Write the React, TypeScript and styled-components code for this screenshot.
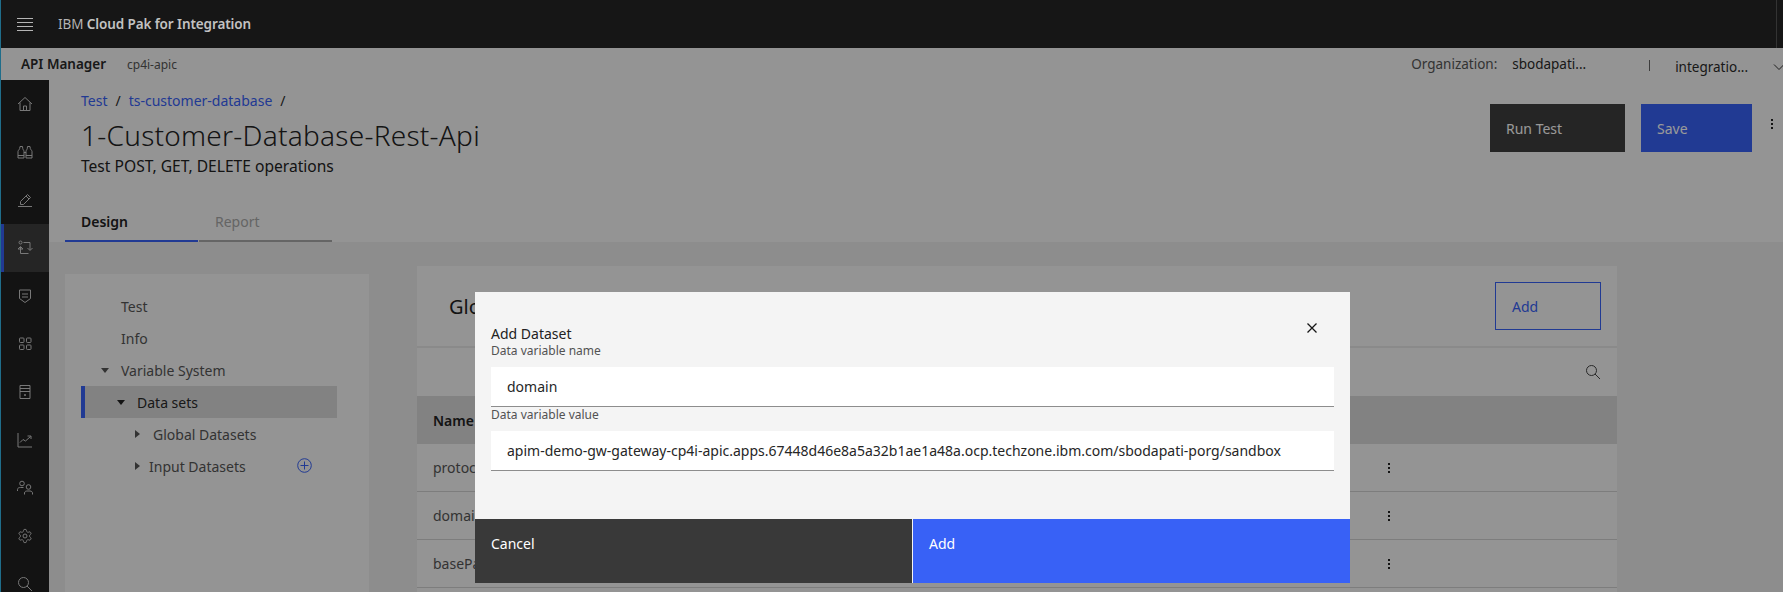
import React from 'react';
import styled, { createGlobalStyle } from 'styled-components';

const GlobalStyle = createGlobalStyle`
  html, body { margin: 0; padding: 0; background: #f7f7f7; }
  * { box-sizing: border-box; }
  body { font-family: "Noto Sans", "Open Sans", Arial, sans-serif; }
`;

const Page = styled.div`
  width: 1783px;
  height: 592px;
  overflow: hidden;
  display: flex;
  flex-direction: column;
  border-left: 1px solid #1f6d8a;
  background: #f7f7f7;
`;

const TopBar = styled.header`
  flex: 0 0 48px;
  display: flex;
  align-items: center;
  background: #161616;
  color: #b4b4b4;
  font-size: 13.5px;
  position: relative;
  z-index: 3;
`;

const Burger = styled.div`
  width: 16px;
  height: 13px;
  margin: 0 17px 0 16px;
  display: flex;
  flex-direction: column;
  justify-content: space-between;
  span { display: block; height: 1px; background: #b5b5b5; }
`;

const Brand = styled.div`
  font-weight: 400;
  margin-left: 8px;
  letter-spacing: -0.1px;
  b { font-weight: 600; color: #c2c2c2; }
`;

const TopDivider = styled.div`
  width: 1px;
  height: 48px;
  background: #333;
  margin-left: auto;
  margin-right: 6px;
`;

const Below = styled.div`
  flex: 1;
  position: relative;
  display: flex;
  flex-direction: column;
  min-height: 0;
`;

const SubHeader = styled.div`
  flex: 0 0 32px;
  display: flex;
  align-items: center;
  padding-left: 20px;
  color: #2a2a2a;
`;

const Product = styled.span`
  font-size: 13.5px;
  font-weight: 600;
  width: 106px;
`;

const Instance = styled.span`
  font-size: 12px;
  color: #555;
`;

const OrgLabel = styled.span`
  margin-left: auto;
  font-size: 13.5px;
  color: #555;
  width: 101px;
`;

const OrgValue = styled.span<{ $drop?: boolean }>`
  font-size: 13.5px;
  color: #2a2a2a;
  ${p => p.$drop && 'padding-top: 5px;'}
`;

const OrgBar = styled.span`
  width: 1px;
  height: 11px;
  background: #666;
  margin: 2px 25px 0 63px;
`;

const ChevronBox = styled.span`
  width: 12px;
  margin: 6px -2px 0 25px;
  display: flex;
`;

const Body = styled.div`
  flex: 1;
  display: flex;
  min-height: 0;
`;

const Sidebar = styled.nav`
  flex: 0 0 48px;
  background: #212121;
  display: flex;
  flex-direction: column;
`;

const NavItem = styled.div<{ $active?: boolean }>`
  flex: 0 0 48px;
  display: flex;
  align-items: center;
  justify-content: center;
  color: #c8c8c8;
  background: ${p => (p.$active ? '#3e3e3e' : 'transparent')};
  box-shadow: ${p => (p.$active ? 'inset 3px 0 0 #3861f6' : 'none')};
  svg { width: 16px; height: 16px; fill: none; stroke: currentColor; stroke-width: 1; }
`;

const Main = styled.main`
  flex: 1;
  display: flex;
  flex-direction: column;
  min-width: 0;
`;

const PageHeader = styled.section`
  flex: 0 0 162px;
  padding: 11px 0 0 32px;
  position: relative;
  display: flex;
  flex-direction: column;
`;

const Crumbs = styled.div`
  display: flex;
  align-items: center;
  height: 18px;
  font-size: 14px;
  gap: 8px;
  color: #2a2a2a;
  a { color: #3861f6; text-decoration: none; }
`;

const Title = styled.h1`
  margin: 8px 0 0;
  height: 36px;
  font-size: 28px;
  line-height: 36px;
  font-weight: 300;
  color: #222;
  letter-spacing: 0.25px;
`;

const Subtitle = styled.p`
  margin: 3px 0 0;
  font-size: 15.6px;
  line-height: 20px;
  font-weight: 400;
  color: #222;
`;

const Tabs = styled.div`
  display: flex;
  gap: 1px;
  margin: auto 0 0 -16px;
`;

const Tab = styled.div<{ $active?: boolean }>`
  width: 133px;
  height: 42px;
  padding: 12px 0 0 16px;
  font-size: 14px;
  font-weight: ${p => (p.$active ? 600 : 400)};
  color: ${p => (p.$active ? '#222' : '#a8a8a8')};
  border-bottom: 2px solid ${p => (p.$active ? '#3861f6' : '#a8a8a8')};
`;

const Actions = styled.div`
  position: absolute;
  top: 24px;
  right: 0;
  display: flex;
  align-items: flex-start;
`;

const ActionButton = styled.button<{ $primary?: boolean }>`
  height: 48px;
  width: ${p => (p.$primary ? '111px' : '135px')};
  margin-right: ${p => (p.$primary ? '12px' : '16px')};
  padding: 0 0 0 16px;
  border: none;
  text-align: left;
  font: 400 14px "Noto Sans", sans-serif;
  color: #fff;
  background: ${p => (p.$primary ? '#3861f6' : '#3e3e3e')};
`;

const MenuDots = styled.span`
  display: flex;
  flex-direction: column;
  gap: 2px;
  width: 16px;
  align-items: center;
  i { display: block; width: 2px; height: 2px; background: currentColor; }
`;

const HeaderDots = styled(MenuDots)`
  margin: 15px 3px 0 0;
  color: #222;
`;

const Content = styled.section`
  flex: 1;
  display: flex;
  align-items: flex-start;
  gap: 48px;
  padding: 24px 0 0 16px;
  background: #ececec;
  min-height: 0;
`;

const Tree = styled.aside`
  flex: 0 0 304px;
  height: 400px;
  margin-top: 8px;
  padding: 16px 32px 16px 16px;
  background: #f7f7f7;
`;

const TreeRow = styled.div<{ $level: number; $selected?: boolean; $gap?: number }>`
  height: 32px;
  display: flex;
  align-items: center;
  padding-left: ${p => 16 + p.$level * 16}px;
  gap: ${p => p.$gap ?? 8}px;
  font-size: 14px;
  color: ${p => (p.$selected ? '#2a2a2a' : '#555')};
  background: ${p => (p.$selected ? '#d9d9d9' : 'transparent')};
  box-shadow: ${p => (p.$selected ? 'inset 4px 0 0 #3861f6' : 'none')};
`;

const CaretSlot = styled.span<{ $shade?: string }>`
  width: 16px;
  height: 16px;
  display: flex;
  align-items: center;
  justify-content: center;
  svg { fill: ${p => p.$shade ?? '#555'}; }
`;

const AddCircle = styled.svg`
  width: 15px;
  height: 15px;
  margin: -2px 25px 0 auto;
  fill: none;
  stroke: #3861f6;
  stroke-width: 1;
`;

const Panel = styled.div`
  flex: 0 0 1200px;
  height: 400px;
  background: #f7f7f7;
`;

const PanelHead = styled.div`
  height: 82px;
  display: flex;
  align-items: center;
  justify-content: space-between;
  padding: 0 16px 0 32px;
  border-bottom: 2px solid #e6e6e6;
`;

const PanelTitle = styled.h2`
  margin: 0;
  font-size: 20px;
  font-weight: 400;
  color: #222;
`;

const OutlineButton = styled.button`
  width: 106px;
  height: 48px;
  padding: 0 0 0 16px;
  text-align: left;
  background: transparent;
  border: 1px solid #3861f6;
  color: #3861f6;
  font: 400 14px "Noto Sans", sans-serif;
`;

const PanelTools = styled.div`
  height: 48px;
  display: flex;
  align-items: center;
  justify-content: flex-end;
  padding-right: 16px;
  color: #444;
  svg { width: 16px; height: 16px; fill: none; stroke: currentColor; stroke-width: 1; }
`;

const TableRow = styled.div<{ $head?: boolean }>`
  height: 48px;
  display: grid;
  grid-template-columns: 948px 16px 1fr;
  align-items: center;
  padding-left: 16px;
  font-size: 14px;
  font-weight: ${p => (p.$head ? 600 : 400)};
  color: ${p => (p.$head ? '#222' : '#555')};
  background: ${p => (p.$head ? '#d9d9d9' : 'transparent')};
  border-bottom: ${p => (p.$head ? 'none' : '1px solid #d0d0d0')};
`;

const RowDots = styled(MenuDots)`
  color: #222;
`;

const Scrim = styled.div`
  position: absolute;
  inset: 0;
  background: rgba(0, 0, 0, 0.4);
`;

const Modal = styled.div`
  position: absolute;
  left: 474px;
  top: 244px;
  width: 875px;
  height: 291px;
  display: flex;
  flex-direction: column;
  background: #f4f4f4;
`;

const CloseButton = styled.svg`
  position: absolute;
  top: 30px;
  right: 32px;
  width: 12px;
  height: 12px;
  stroke: #161616;
  stroke-width: 1.3;
  fill: none;
`;

const ModalBody = styled.div`
  flex: 1;
  padding: 32px 16px 0;
`;

const ModalTitle = styled.div`
  font-size: 14px;
  line-height: 19px;
  color: #222;
`;

const FieldLabel = styled.label`
  display: block;
  font-size: 12px;
  line-height: 16px;
  margin: 0 0 8px;
  color: #525252;
`;

const FieldValue = styled.div`
  height: 40px;
  padding: 0 16px;
  display: flex;
  align-items: center;
  background: #fff;
  border-bottom: 1px solid #8d8d8d;
  font-size: 14px;
  color: #262626;
`;

const ModalFooter = styled.div`
  flex: 0 0 64px;
  display: flex;
  gap: 1px;
`;

const FooterButton = styled.button<{ $primary?: boolean }>`
  flex: 1;
  padding: 16px;
  border: none;
  text-align: left;
  display: flex;
  align-items: flex-start;
  font: 400 14px/18px "Noto Sans", sans-serif;
  color: #fff;
  background: ${p => (p.$primary ? '#3861f6' : '#393939')};
`;

const navIcons: React.ReactNode[] = [
  <svg viewBox="0 0 16 16" key="home"><path d="M1 8 8 1.5 15 8M3 6.5V14.5H13V6.5M6.5 14.5V10H9.5V14.5" /></svg>,
  <svg viewBox="0 0 16 16" key="binoculars"><path d="M1 14V7.5C1 6 3 6 3 2.5H5.5C5.5 6 7 6 7 7.5V14ZM1 11.5H7M9 14V7.5C9 6 10.5 6 10.5 2.5H13C13 6 15 6 15 7.5V14ZM9 11.5H15M7 8.5H9" /></svg>,
  <svg viewBox="0 0 16 16" key="edit"><path d="M1 14.5H15M3.5 12.5V9.5L10.5 2.5 13.5 5.5 6.5 12.5ZM9 4 12 7" /></svg>,
  <svg viewBox="0 0 16 16" key="test"><circle cx="3.5" cy="2.5" r="1.5" /><path d="M1 9 3.5 6.5 6 9M3.5 7V13.5H11.5M6.5 2.5H13V10M10.5 8 13 10.5 15.5 8M1 9H6" /></svg>,
  <svg viewBox="0 0 16 16" key="shield"><path d="M2.5 2H13.5V10.5L8 14.5 2.5 10.5ZM5 6H11M5 9H11" /></svg>,
  <svg viewBox="0 0 16 16" key="grid"><rect x="2.5" y="2" width="4.5" height="4.5" rx=".8" /><rect x="9.5" y="2" width="4.5" height="4.5" rx=".8" /><rect x="2.5" y="9" width="4.5" height="4.5" rx=".8" /><rect x="9.5" y="9" width="4.5" height="4.5" rx=".8" /></svg>,
  <svg viewBox="0 0 16 16" key="server"><path d="M3 1.5H13V14.5H3ZM3 4.5H13M3 7.5H13" /><circle cx="8" cy="11" r=".6" fill="currentColor" /></svg>,
  <svg viewBox="0 0 16 16" key="chart"><path d="M1 1V15H15M3 10.5 6 7.5 8.5 9 13.5 4.5M10.5 4H14V7" /></svg>,
  <svg viewBox="0 0 16 16" key="users"><circle cx="5" cy="3.5" r="2.3" /><circle cx="11.5" cy="7" r="2.3" /><path d="M.5 11V9.5C.5 8 2 7.5 3.5 7.5H6.5M7.5 14.5V13C7.5 11.5 9 11 10 11H13C14.5 11 15.5 12 15.5 13V14.5" /></svg>,
  <svg viewBox="0 0 24 24" key="gear" style={{ strokeWidth: 1.5 }}><path d="M12.22 2h-.44a2 2 0 0 0-2 2v.18a2 2 0 0 1-1 1.73l-.43.25a2 2 0 0 1-2 0l-.15-.08a2 2 0 0 0-2.73.73l-.22.38a2 2 0 0 0 .73 2.73l.15.1a2 2 0 0 1 1 1.72v.51a2 2 0 0 1-1 1.74l-.15.09a2 2 0 0 0-.73 2.73l.22.38a2 2 0 0 0 2.73.73l.15-.08a2 2 0 0 1 2 0l.43.25a2 2 0 0 1 1 1.73V20a2 2 0 0 0 2 2h.44a2 2 0 0 0 2-2v-.18a2 2 0 0 1 1-1.73l.43-.25a2 2 0 0 1 2 0l.15.08a2 2 0 0 0 2.73-.73l.22-.39a2 2 0 0 0-.73-2.73l-.15-.08a2 2 0 0 1-1-1.74v-.5a2 2 0 0 1 1-1.74l.15-.09a2 2 0 0 0 .73-2.73l-.22-.38a2 2 0 0 0-2.73-.73l-.15.08a2 2 0 0 1-2 0l-.43-.25a2 2 0 0 1-1-1.73V4a2 2 0 0 0-2-2z" /><circle cx="12" cy="12" r="3" /></svg>,
  <svg viewBox="0 0 16 16" key="search"><circle cx="6.5" cy="6.5" r="5" /><path d="M10 10 15 15" /></svg>,
];

const CaretDown = () => (
  <svg width="8" height="5" viewBox="0 0 8 5"><path d="M0 0H8L4 5Z" /></svg>
);

const CaretRight = () => (
  <svg width="5" height="8" viewBox="0 0 5 8"><path d="M0 0 5 4 0 8Z" /></svg>
);

const Dots = () => (
  <>
    <i />
    <i />
    <i />
  </>
);

const tableRows = ['protocol', 'domain', 'basePath'];

const App: React.FunctionComponent = () => {
  return (
    <Page>
      <GlobalStyle />
      <TopBar>
        <Burger>
          <span />
          <span />
          <span />
          <span />
        </Burger>
        <Brand>
          IBM <b>Cloud Pak for Integration</b>
        </Brand>
        <TopDivider />
      </TopBar>
      <Below>
        <SubHeader>
          <Product>API Manager</Product>
          <Instance>cp4i-apic</Instance>
          <OrgLabel>Organization:</OrgLabel>
          <OrgValue>sbodapati...</OrgValue>
          <OrgBar />
          <OrgValue $drop>integratio...</OrgValue>
          <ChevronBox>
            <svg width="12" height="8" viewBox="0 0 12 8" fill="none" stroke="#333" strokeWidth="1">
              <path d="M1 1.5 6 6.5 11 1.5" />
            </svg>
          </ChevronBox>
        </SubHeader>
        <Body>
          <Sidebar>
            {navIcons.map((icon, i) => (
              <NavItem key={i} $active={i === 3}>
                {icon}
              </NavItem>
            ))}
          </Sidebar>
          <Main>
            <PageHeader>
              <Crumbs>
                <a href="#test">Test</a>
                <span>/</span>
                <a href="#suite">ts-customer-database</a>
                <span>/</span>
              </Crumbs>
              <Title>1-Customer-Database-Rest-Api</Title>
              <Subtitle>Test POST, GET, DELETE operations</Subtitle>
              <Tabs>
                <Tab $active>Design</Tab>
                <Tab>Report</Tab>
              </Tabs>
              <Actions>
                <ActionButton>Run Test</ActionButton>
                <ActionButton $primary>Save</ActionButton>
                <HeaderDots>
                  <Dots />
                </HeaderDots>
              </Actions>
            </PageHeader>
            <Content>
              <Tree>
                <TreeRow $level={0}>
                  <CaretSlot />
                  Test
                </TreeRow>
                <TreeRow $level={0}>
                  <CaretSlot />
                  Info
                </TreeRow>
                <TreeRow $level={0}>
                  <CaretSlot>
                    <CaretDown />
                  </CaretSlot>
                  Variable System
                </TreeRow>
                <TreeRow $level={1} $selected>
                  <CaretSlot $shade="#222">
                    <CaretDown />
                  </CaretSlot>
                  Data sets
                </TreeRow>
                <TreeRow $level={2}>
                  <CaretSlot>
                    <CaretRight />
                  </CaretSlot>
                  Global Datasets
                </TreeRow>
                <TreeRow $level={2} $gap={4}>
                  <CaretSlot>
                    <CaretRight />
                  </CaretSlot>
                  Input Datasets
                  <AddCircle viewBox="0 0 15 15">
                    <circle cx="7.5" cy="7.5" r="6.8" />
                    <path d="M3.5 7.5H11.5M7.5 3.5V11.5" />
                  </AddCircle>
                </TreeRow>
              </Tree>
              <Panel>
                <PanelHead>
                  <PanelTitle>Global Datasets</PanelTitle>
                  <OutlineButton>Add</OutlineButton>
                </PanelHead>
                <PanelTools>
                  <svg viewBox="0 0 16 16">
                    <circle cx="6.5" cy="6.5" r="5" />
                    <path d="M10 10 15 15" />
                  </svg>
                </PanelTools>
                <TableRow $head>
                  <span>Name</span>
                </TableRow>
                {tableRows.map(name => (
                  <TableRow key={name}>
                    <span>{name}</span>
                    <RowDots>
                      <Dots />
                    </RowDots>
                  </TableRow>
                ))}
              </Panel>
            </Content>
          </Main>
        </Body>
        <Scrim />
        <Modal>
          <CloseButton viewBox="0 0 12 12">
            <path d="M1.5 1.5 10.5 10.5M10.5 1.5 1.5 10.5" />
          </CloseButton>
          <ModalBody>
            <ModalTitle>Add Dataset</ModalTitle>
            <FieldLabel>Data variable name</FieldLabel>
            <FieldValue>domain</FieldValue>
            <FieldLabel>Data variable value</FieldLabel>
            <FieldValue>apim-demo-gw-gateway-cp4i-apic.apps.67448d46e8a5a32b1ae1a48a.ocp.techzone.ibm.com/sbodapati-porg/sandbox</FieldValue>
          </ModalBody>
          <ModalFooter>
            <FooterButton>Cancel</FooterButton>
            <FooterButton $primary>Add</FooterButton>
          </ModalFooter>
        </Modal>
      </Below>
    </Page>
  );
};

export default App;
